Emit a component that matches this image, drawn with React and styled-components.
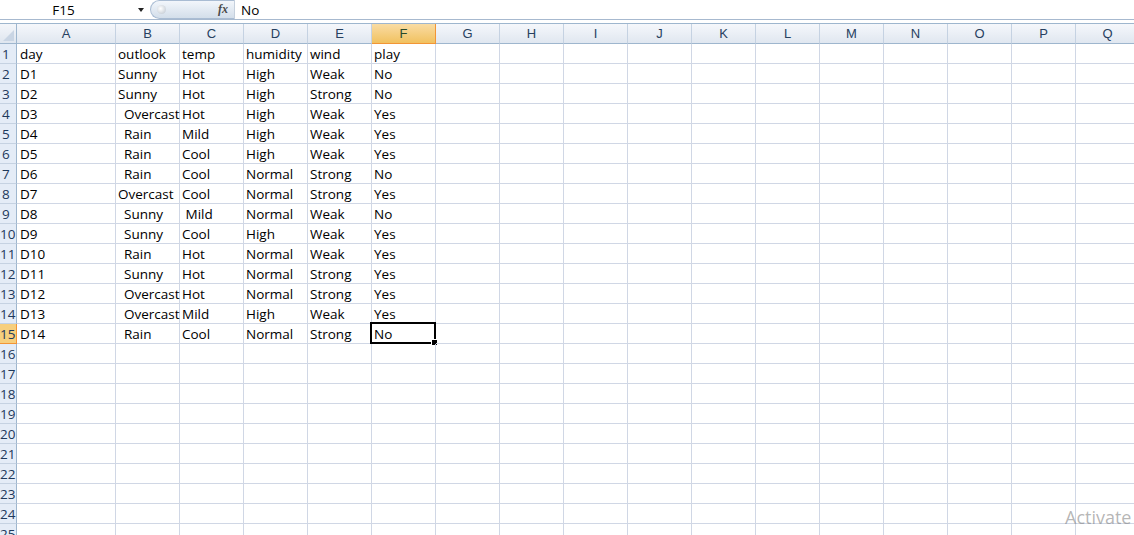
import React from 'react';
import styled, { createGlobalStyle } from 'styled-components';

const GlobalStyle = createGlobalStyle`
  html, body {
    margin: 0;
    padding: 0;
    background: #ffffff;
    overflow: hidden;
  }
  body {
    font-family: 'Open Sans', 'Liberation Sans', sans-serif;
  }
`;

const Page = styled.div`
  position: relative;
  width: 1134px;
  height: 535px;
  overflow: hidden;
  background: #fff;
`;

const FormulaBar = styled.div`
  display: flex;
  align-items: center;
  height: 19px;
  border-bottom: 1px solid #a7b9cf;
  font-size: 13.5px;
  color: #000;
`;

const NameBox = styled.div`
  width: 127px;
  display: flex;
  align-items: center;
  justify-content: center;
`;

const Arrow = styled.div`
  width: 0;
  height: 0;
  margin-left: 11px;
  margin-right: 6px;
  border-left: 3.5px solid transparent;
  border-right: 3.5px solid transparent;
  border-top: 4px solid #222;
`;

const Pill = styled.div`
  position: relative;
  width: 84px;
  height: 19px;
  border-radius: 10px 0 0 10px;
  border: 1px solid #a9bcd3;
  border-right: none;
  box-sizing: border-box;
  background: linear-gradient(#f2f6fb, #d3deea);
  display: flex;
  align-items: center;
  justify-content: flex-end;
  padding-right: 6px;
`;

const Knob = styled.div`
  position: absolute;
  left: 6px;
  top: 4px;
  width: 9px;
  height: 9px;
  border-radius: 50%;
  background: radial-gradient(circle at 40% 40%, #ffffff, #b9c2cc);
`;

const Fx = styled.span`
  font-family: 'Liberation Serif', serif;
  font-style: italic;
  font-weight: bold;
  font-size: 12px;
  color: #4a4a4a;
`;

const Divider = styled.div`
  width: 1px;
  height: 19px;
  background: #c5d0dd;
`;

const FormulaText = styled.div`
  padding-left: 6px;
`;

const Grid = styled.div`
  margin-top: 3px;
  display: grid;
  grid-template-columns: 17px 99px repeat(16, 64px);
  grid-auto-rows: 20px;
  border-top: 1px solid #9eb6ce;
  font-size: 13.5px;
`;

const Corner = styled.div`
  height: 20px;
  box-sizing: border-box;
  border-right: 1px solid #9eb6ce;
  border-bottom: 1px solid #9eb6ce;
  background: linear-gradient(#f4f6fa, #dfe6ef);
  position: relative;

  &::after {
    content: '';
    position: absolute;
    right: 2px;
    bottom: 2px;
    width: 0;
    height: 0;
    border-left: 11px solid transparent;
    border-bottom: 11px solid #c9d5e4;
  }
`;

const ColHead = styled.div`
  height: 20px;
  box-sizing: border-box;
  display: flex;
  align-items: center;
  justify-content: center;
  font-family: 'Liberation Sans', sans-serif;
  font-size: 13px;
  color: ${({ active }) => (active ? '#2a4a2a' : '#27415f')};
  border-right: 1px solid ${({ active }) => (active ? '#f29536' : '#c5d2e2')};
  border-bottom: 1px solid ${({ active }) => (active ? '#f29536' : '#9eb6ce')};
  background: ${({ active }) =>
    active
      ? 'linear-gradient(#f9dca4, #f1c15f)'
      : 'linear-gradient(#f5f7fb, #e0e7f0)'};
`;

const RowHead = styled.div`
  box-sizing: border-box;
  display: flex;
  align-items: center;
  overflow: hidden;
  white-space: nowrap;
  padding-left: ${({ wide }) => (wide ? '0' : '2px')};
  font-size: 13.5px;
  color: #1e395b;
  border-right: 1px solid ${({ active }) => (active ? '#f29536' : '#9eb6ce')};
  border-bottom: 1px solid ${({ active }) => (active ? '#f29536' : '#c5d2e2')};
  background: ${({ active }) => (active ? '#f7cf7d' : '#e4ecf7')};
`;

const Cell = styled.div`
  position: relative;
  box-sizing: border-box;
  display: flex;
  align-items: center;
  white-space: nowrap;
  padding-left: ${({ indent, first }) => (indent ? '8px' : first ? '3px' : '2px')};
  color: #000;
  border-right: 1px solid #d0d7e5;
  border-bottom: 1px solid #d0d7e5;
`;

const Selection = styled.div`
  position: absolute;
  left: -2px;
  top: -2px;
  right: -1px;
  bottom: -1px;
  border: 2px solid #000;
  pointer-events: none;

  &::after {
    content: '';
    position: absolute;
    right: -4px;
    bottom: -4px;
    width: 5px;
    height: 5px;
    background: #000;
    border: 1px solid #fff;
  }
`;

const Watermark = styled.div`
  position: absolute;
  left: 1065px;
  top: 505px;
  font-family: 'Open Sans', 'Noto Sans', sans-serif;
  font-size: 18px;
  color: rgba(120, 120, 120, 0.55);
  white-space: nowrap;
`;

const cols = 'ABCDEFGHIJKLMNOPQ'.split('');

// [text, indented] per cell; 'small' = one leading space
const data = [
  [['day'], ['outlook'], ['temp'], ['humidity'], ['wind'], ['play']],
  [['D1'], ['Sunny'], ['Hot'], ['High'], ['Weak'], ['No']],
  [['D2'], ['Sunny'], ['Hot'], ['High'], ['Strong'], ['No']],
  [['D3'], ['Overcast', true], ['Hot'], ['High'], ['Weak'], ['Yes']],
  [['D4'], ['Rain', true], ['Mild'], ['High'], ['Weak'], ['Yes']],
  [['D5'], ['Rain', true], ['Cool'], ['High'], ['Weak'], ['Yes']],
  [['D6'], ['Rain', true], ['Cool'], ['Normal'], ['Strong'], ['No']],
  [['D7'], ['Overcast'], ['Cool'], ['Normal'], ['Strong'], ['Yes']],
  [['D8'], ['Sunny', true], ['Mild', 'small'], ['Normal'], ['Weak'], ['No']],
  [['D9'], ['Sunny', true], ['Cool'], ['High'], ['Weak'], ['Yes']],
  [['D10'], ['Rain', true], ['Hot'], ['Normal'], ['Weak'], ['Yes']],
  [['D11'], ['Sunny', true], ['Hot'], ['Normal'], ['Strong'], ['Yes']],
  [['D12'], ['Overcast', true], ['Hot'], ['Normal'], ['Strong'], ['Yes']],
  [['D13'], ['Overcast', true], ['Mild'], ['High'], ['Weak'], ['Yes']],
  [['D14'], ['Rain', true], ['Cool'], ['Normal'], ['Strong'], ['No']],
];

const ROWS = 25;
const SEL_ROW = 15;
const SEL_COL = 5;

const App = () => {
  return (
    <Page>
      <GlobalStyle />
      <FormulaBar>
        <NameBox>F15</NameBox>
        <Arrow />
        <Pill>
          <Knob />
          <Fx>fx</Fx>
        </Pill>
        <Divider />
        <FormulaText>No</FormulaText>
      </FormulaBar>
      <Grid>
        <Corner />
        {cols.map((c, i) => (
          <ColHead key={c} active={i === SEL_COL}>
            {c}
          </ColHead>
        ))}
        {Array(ROWS)
          .fill(null)
          .map((_r, r) => {
            const rowNo = r + 1;
            const row = data[r] || [];
            return (
              <React.Fragment key={rowNo}>
                <RowHead active={rowNo === SEL_ROW} wide={rowNo > 9}>
                  {rowNo}
                </RowHead>
                {cols.map((c, ci) => {
                  const [text, indent] = row[ci] || [];
                  const isSel = rowNo === SEL_ROW && ci === SEL_COL;
                  return (
                    <Cell key={c} indent={indent === true} first={ci === 0}>
                      {indent === 'small' ? '\u00a0' + text : text}
                      {isSel && <Selection />}
                    </Cell>
                  );
                })}
              </React.Fragment>
            );
          })}
      </Grid>
      <Watermark>Activate</Watermark>
    </Page>
  );
};

export default App;
